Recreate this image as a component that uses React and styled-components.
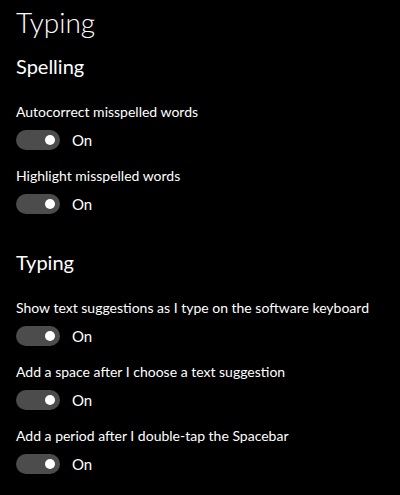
import React from 'react';
import styled, { createGlobalStyle } from 'styled-components';

const GlobalStyle = createGlobalStyle`
  html, body {
    margin: 0;
    padding: 0;
    background: #000000;
  }
  body {
    font-family: Lato, "Noto Sans", Arial, sans-serif;
    color: #ffffff;
  }
`;

const Page = styled.div`
  width: 400px;
  height: 495px;
  box-sizing: border-box;
  padding: 4px 16px 0;
  background: #000000;
  overflow: hidden;
`;

const Title = styled.h1`
  margin: 0;
  font-size: 28px;
  font-weight: 300;
  line-height: 36px;
`;

const Section = styled.section`
  display: flex;
  flex-direction: column;
  gap: 16px;
  margin-top: ${(p) => p.$top}px;
`;

const SectionTitle = styled.h2`
  margin: 0 0 7px;
  font-size: 20px;
  font-weight: 400;
  line-height: 26px;
`;

const Setting = styled.div`
  display: flex;
  flex-direction: column;
  gap: 8px;
`;

const Label = styled.div`
  font-size: 14px;
  line-height: 20px;
  white-space: nowrap;
  color: #ffffff;
`;

const ToggleRow = styled.div`
  display: flex;
  align-items: center;
  gap: 12px;
  height: 20px;
`;

const Track = styled.div`
  position: relative;
  width: 44px;
  height: 20px;
  border-radius: 10px;
  background: #4c4c4c;
`;

const Knob = styled.span`
  position: absolute;
  top: 5px;
  right: 5px;
  width: 10px;
  height: 10px;
  border-radius: 50%;
  background: #ffffff;
`;

const State = styled.span`
  font-size: 15px;
  line-height: 20px;
`;

const Toggle = ({ label }) => (
  <Setting>
    <Label>{label}</Label>
    <ToggleRow>
      <Track>
        <Knob />
      </Track>
      <State>On</State>
    </ToggleRow>
  </Setting>
);

export default function App() {
  return (
    <Page>
      <GlobalStyle />
      <Title>Typing</Title>
      <Section $top={13}>
        <SectionTitle>Spelling</SectionTitle>
        <Toggle label="Autocorrect misspelled words" />
        <Toggle label="Highlight misspelled words" />
      </Section>
      <Section $top={35}>
        <SectionTitle>Typing</SectionTitle>
        <Toggle label="Show text suggestions as I type on the software keyboard" />
        <Toggle label="Add a space after I choose a text suggestion" />
        <Toggle label="Add a period after I double-tap the Spacebar" />
      </Section>
    </Page>
  );
}
